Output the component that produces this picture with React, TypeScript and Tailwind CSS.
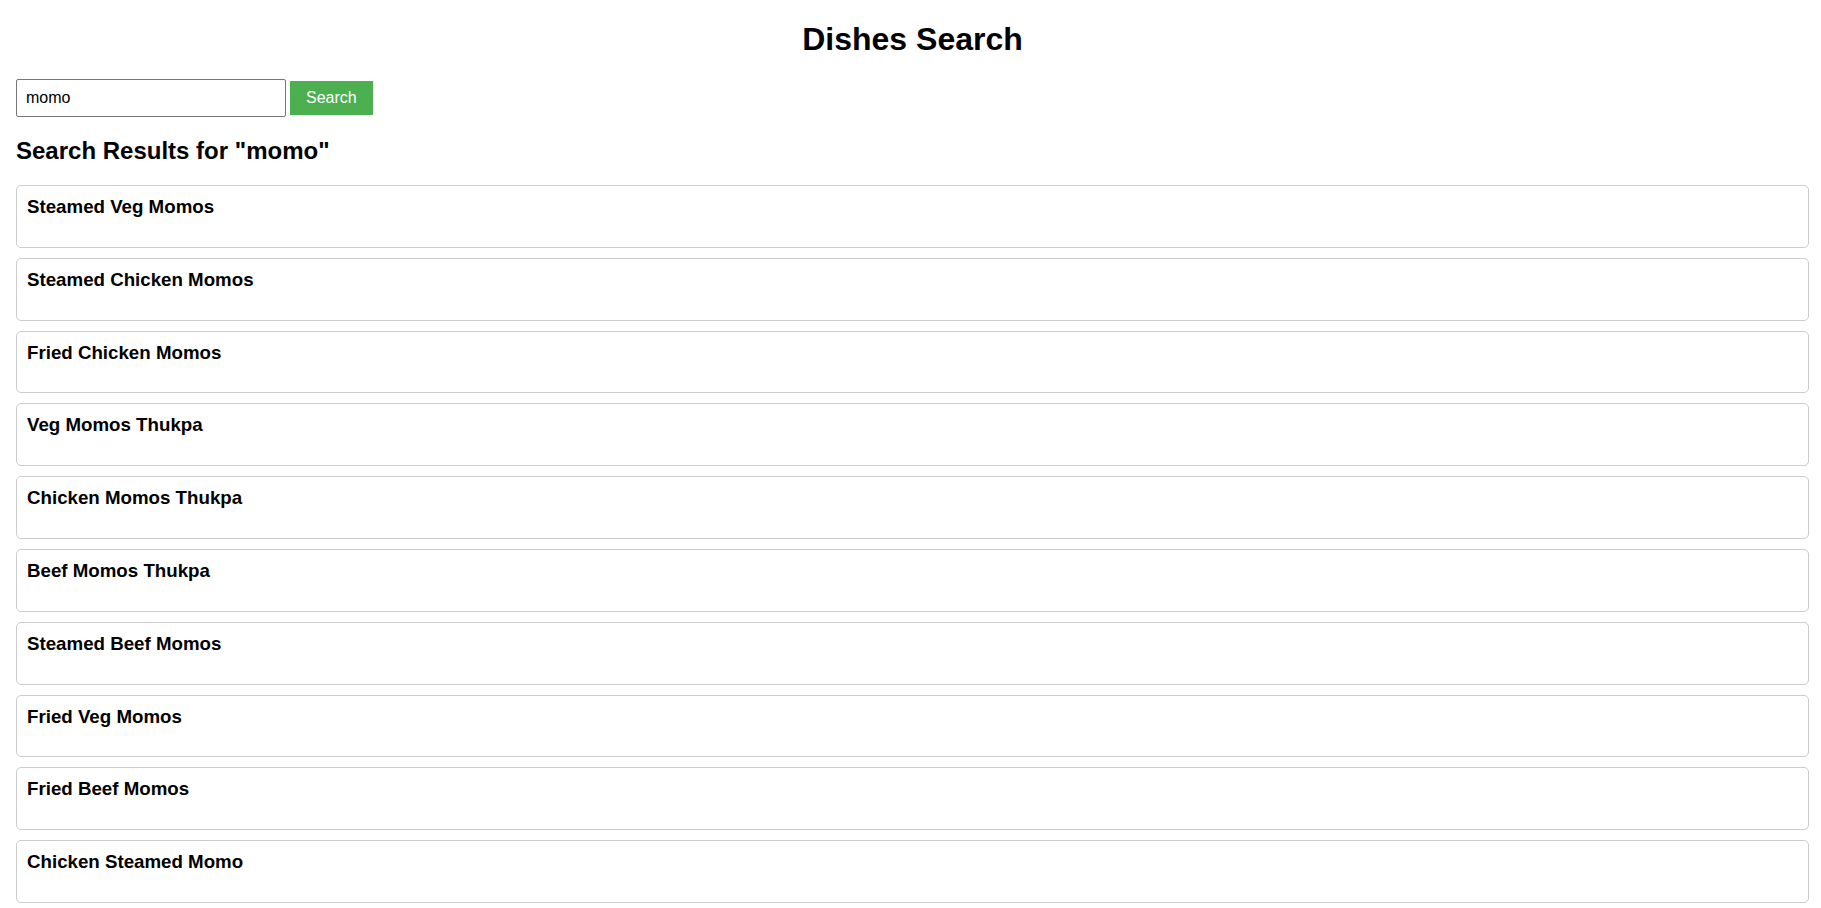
const dishes = [
  "Steamed Veg Momos",
  "Steamed Chicken Momos",
  "Fried Chicken Momos",
  "Veg Momos Thukpa",
  "Chicken Momos Thukpa",
  "Beef Momos Thukpa",
  "Steamed Beef Momos",
  "Fried Veg Momos",
  "Fried Beef Momos",
  "Chicken Steamed Momo",
];

function DishCard({ name }: { name: string }) {
  return (
    <div className="h-[62.8px] shrink-0 rounded-[5px] border border-[#ccc] px-[10px] pt-[10px]">
      <h3 className="text-[18.72px] font-bold leading-[normal]">{name}</h3>
    </div>
  );
}

export default function App() {
  const query = "momo";
  return (
    <div className="min-h-screen bg-white pt-[21px] pl-4 pr-3 pb-4 font-['Liberation_Sans',Arial,sans-serif] text-black">
      <h1 className="mb-[21px] text-center text-[32px] font-bold leading-[normal]">
        Dishes Search
      </h1>
      <div className="flex items-center gap-1">
        <input
          defaultValue={query}
          className="h-[38px] w-[270px] rounded-[2px] border border-[#767676] px-[9px] text-[16px] outline-none"
        />
        <button className="h-[34px] bg-[#4CAF50] px-4 text-[16px] text-white">
          Search
        </button>
      </div>
      <h2 className="mt-5 mb-5 text-[24px] font-bold leading-[normal]">
        Search Results for "{query}"
      </h2>
      <div className="flex flex-col gap-[10px]">
        {dishes.map((d) => (
          <DishCard key={d} name={d} />
        ))}
      </div>
    </div>
  );
}
